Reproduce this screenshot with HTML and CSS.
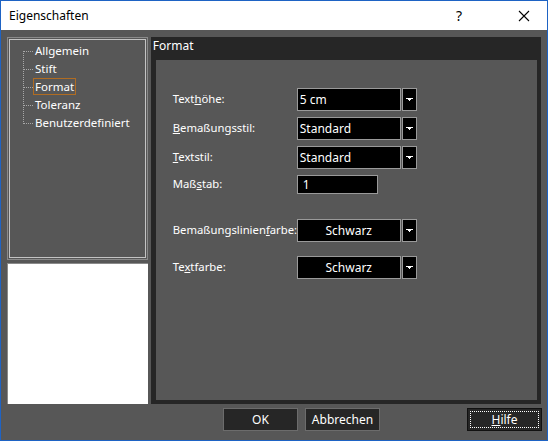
FILE: index.html
```html
<!DOCTYPE html>
<html lang="de">
  <head>
    <meta charset="UTF-8" />
    <title>Eigenschaften</title>
    <link rel="stylesheet" href="styles.css">
  </head>
  <body>
    <div class="window">
      <div class="titlebar">
        <span class="title">Eigenschaften</span>
        <span class="help-q">?</span>
        <svg class="close-x" width="12" height="12" viewBox="0 0 12 12">
          <path d="M1 1 L11 11 M11 1 L1 11" stroke="#000" stroke-width="1.1" />
        </svg>
      </div>

      <div class="main">
        <div class="sidebar">
          <div class="tree-outer">
            <div class="tree">
              <ul class="tree-list">
                <li>Allgemein</li>
                <li>Stift</li>
                <li class="selected"><span>Format</span></li>
                <li>Toleranz</li>
                <li>Benutzerdefiniert</li>
              </ul>
            </div>
          </div>
          <div class="preview"></div>
        </div>

        <div class="panel">
          <div class="panel-header">Format</div>
          <div class="panel-body">
            <div class="row row-first">
              <label class="label">Text<u>h</u>öhe:</label>
              <div class="combo">
                <div class="combo-field">5 cm</div>
                <div class="combo-btn"><svg width="7" height="4" viewBox="0 0 7 4"><path d="M0 0h7v1H5v1H4v1H3V2H2V1H0z" fill="#fff"/></svg></div>
              </div>
            </div>
            <div class="row">
              <label class="label"><u>B</u>emaßungsstil:</label>
              <div class="combo">
                <div class="combo-field">Standard</div>
                <div class="combo-btn"><svg width="7" height="4" viewBox="0 0 7 4"><path d="M0 0h7v1H5v1H4v1H3V2H2V1H0z" fill="#fff"/></svg></div>
              </div>
            </div>
            <div class="row">
              <label class="label"><u>T</u>extstil:</label>
              <div class="combo">
                <div class="combo-field">Standard</div>
                <div class="combo-btn"><svg width="7" height="4" viewBox="0 0 7 4"><path d="M0 0h7v1H5v1H4v1H3V2H2V1H0z" fill="#fff"/></svg></div>
              </div>
            </div>
            <div class="row row-scale">
              <label class="label">Maß<u>s</u>tab:</label>
              <div class="input">1</div>
            </div>
            <div class="row row-color">
              <label class="label">Bemaßungslinien<u>f</u>arbe:</label>
              <div class="combo">
                <div class="combo-field centered">Schwarz</div>
                <div class="combo-btn"><svg width="7" height="4" viewBox="0 0 7 4"><path d="M0 0h7v1H5v1H4v1H3V2H2V1H0z" fill="#fff"/></svg></div>
              </div>
            </div>
            <div class="row row-color2">
              <label class="label">Te<u>x</u>tfarbe:</label>
              <div class="combo">
                <div class="combo-field centered">Schwarz</div>
                <div class="combo-btn"><svg width="7" height="4" viewBox="0 0 7 4"><path d="M0 0h7v1H5v1H4v1H3V2H2V1H0z" fill="#fff"/></svg></div>
              </div>
            </div>
          </div>
        </div>
      </div>

      <div class="footer">
        <button class="button btn-ok">OK</button>
        <button class="button">Abbrechen</button>
        <button class="button btn-help"><span class="focus"><u>H</u>ilfe</span></button>
      </div>
    </div>
  </body>
</html>
```

FILE: styles.css
```css
body {
  margin: 0;
  padding: 0;
  font-family: "Noto Sans", "Open Sans", sans-serif;
  font-size: 12px;
  background-color: #575757;
}

.window {
  width: 548px;
  height: 441px;
  box-sizing: border-box;
  border: 1px solid #1e63c4;
  background-color: #575757;
  display: flex;
  flex-direction: column;
}

.titlebar {
  height: 29px;
  background-color: #fff;
  display: flex;
  align-items: center;
  color: #000;
  flex-shrink: 0;
}

.title {
  margin-left: 8px;
  font-size: 12px;
  flex: 1;
}

.help-q {
  font-size: 14px;
  margin-right: 56px;
}

.close-x {
  margin-right: 17px;
}

.main {
  display: flex;
  gap: 3px;
  padding: 7px 6px 0 6px;
  height: 367px;
}

/* left side */
.sidebar {
  width: 141px;
  display: flex;
  flex-direction: column;
  gap: 3px;
}

.tree-outer {
  height: 224px;
  box-sizing: border-box;
  border: 1px solid #8a8a8a;
  padding: 1px;
}

.tree {
  height: 100%;
  box-sizing: border-box;
  border: 1px solid #c4c4c4;
  padding: 2px 0 0 12px;
}

.tree-list {
  list-style: none;
  margin: 0;
  padding: 0;
  color: #fff;
  position: relative;
  font-size: 11.5px;
}

.tree-list::before {
  content: "";
  position: absolute;
  left: 1px;
  top: 9px;
  height: 73px;
  border-left: 1px dotted #a8a8a8;
}

.tree-list li {
  height: 18px;
  line-height: 18px;
  padding-left: 13px;
  position: relative;
}

.tree-list li::before {
  content: "";
  position: absolute;
  left: 1px;
  top: 9px;
  width: 10px;
  border-top: 1px dotted #a8a8a8;
}

.tree-list li.selected {
  padding-left: 11px;
}

.tree-list li.selected span {
  border: 1px solid #b06c22;
  padding: 0 1px;
  line-height: 15px;
  display: inline-block;
}

.preview {
  height: 140px;
  background-color: #fff;
  border-top: 1px solid #8a8a8a;
  border-left: 1px solid #8a8a8a;
}

/* right panel */
.panel {
  width: 391px;
  height: 367px;
  background-color: #262626;
  display: flex;
  flex-direction: column;
}

.panel-header {
  height: 23px;
  line-height: 18px;
  padding-left: 2px;
  color: #fff;
}

.panel-body {
  flex: 1;
  margin: 0 4px 4px 5px;
  background-color: #575757;
  padding: 28px 0 0 17px;
}

.row {
  display: flex;
  align-items: center;
  margin-bottom: 6px;
  color: #fff;
}

.label {
  width: 124px;
  margin-top: -3px;
  font-size: 11.3px;
  white-space: nowrap;
}

.row-scale {
  margin-bottom: 25px;
}

.row-color {
  margin-bottom: 14px;
}

.combo {
  display: flex;
  gap: 1px;
  height: 23px;
}

.combo-field {
  width: 104px;
  box-sizing: border-box;
  border: 1px solid #9a9a9a;
  background-color: #000;
  color: #fff;
  padding-left: 2px;
  line-height: 21px;
}

.combo-field.centered {
  text-align: center;
  padding-left: 0;
}

.combo-btn {
  width: 15px;
  box-sizing: border-box;
  border: 1px solid #9a9a9a;
  background-color: #000;
  display: flex;
  align-items: center;
  justify-content: center;
}

.input {
  width: 81px;
  height: 19px;
  box-sizing: border-box;
  border: 1px solid #9a9a9a;
  background-color: #000;
  color: #fff;
  padding-left: 5px;
  line-height: 17px;
}

/* buttons */
.footer {
  display: flex;
  padding: 4px 0 0 222px;
  gap: 7px;
}

.button {
  width: 75px;
  height: 23px;
  background-color: #262626;
  border: 1px solid #6c6c6c;
  color: #fff;
  font-family: "Noto Sans", "Open Sans", sans-serif;
  font-size: 12px;
  padding: 0;
}

.btn-help {
  margin-left: 80px;
  border-color: #111;
  padding: 2px;
}

.btn-help .focus {
  display: block;
  height: 100%;
  box-sizing: border-box;
  border: 1px dotted #fff;
  line-height: 15px;
}
```
